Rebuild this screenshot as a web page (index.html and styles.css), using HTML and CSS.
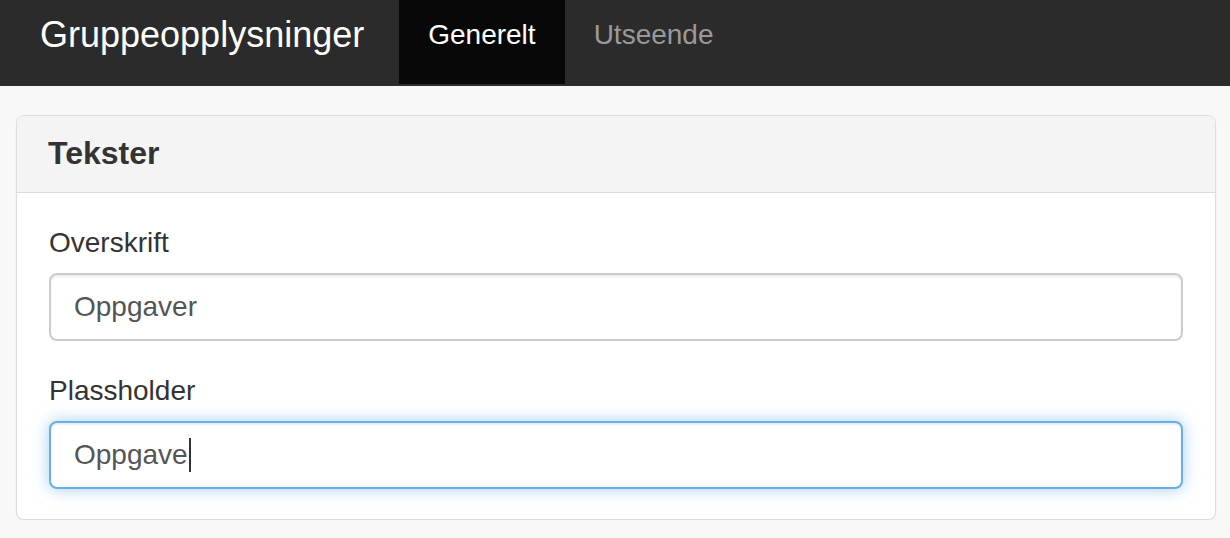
FILE: index.html
```html
<!DOCTYPE html>
<html lang="no">
<head>
<meta charset="utf-8">
<title>Gruppeopplysninger</title>
<link rel="stylesheet" href="styles.css">
</head>
<body>
<nav class="navbar">
  <div class="brand">Gruppeopplysninger</div>
  <ul class="nav">
    <li class="nav-item active">Generelt</li>
    <li class="nav-item">Utseende</li>
  </ul>
</nav>
<main class="main">
  <section class="panel">
    <div class="panel-heading">
      <h3 class="panel-title">Tekster</h3>
    </div>
    <div class="panel-body">
      <div class="form-group">
        <label class="label">Overskrift</label>
        <div class="form-control">Oppgaver</div>
      </div>
      <div class="form-group">
        <label class="label">Plassholder</label>
        <div class="form-control focused">Oppgave<span class="caret-line"></span></div>
      </div>
    </div>
  </section>
</main>
</body>
</html>
```
FILE: styles.css
```css
html, body {
  margin: 0;
  padding: 0;
}
body {
  background: #f8f8f8;
  font-family: "Liberation Sans", Arial, "Helvetica Neue", sans-serif;
  color: #333;
}
.navbar {
  display: flex;
  align-items: stretch;
  height: 84px;
  background: #2b2b2b;
  border-bottom: 2px solid #2d2d2d;
  padding-left: 10px;
}
.brand {
  font-size: 36px;
  line-height: 70px;
  padding: 0 35px 14px 30px;
  color: #fff;
  white-space: nowrap;
}
.nav {
  display: flex;
  list-style: none;
  margin: 0;
  padding: 0;
}
.nav-item {
  font-size: 28px;
  line-height: 70px;
  padding: 0 29px 14px;
  color: #999;
  white-space: nowrap;
}
.nav-item.active {
  background: #080808;
  color: #fff;
}
.main {
  padding: 29px 14px 0 16px;
}
.panel {
  background: #fff;
  border: 1px solid #ddd;
  border-radius: 8px;
  box-shadow: 0 2px 2px rgba(0, 0, 0, 0.05);
  overflow: hidden;
}
.panel-heading {
  background: #f4f4f4;
  border-bottom: 1px solid #ddd;
  padding: 20px 31px 21px;
}
.panel-title {
  margin: 0;
  font-size: 32px;
  line-height: 35px;
  font-weight: bold;
  color: #333;
}
.panel-body {
  padding: 30px 32px;
}
.form-group {
  margin-bottom: 30px;
}
.form-group:last-child {
  margin-bottom: 0;
}
.label {
  display: block;
  font-size: 28px;
  line-height: 40px;
  margin-bottom: 10px;
  color: #333;
}
.form-control {
  box-sizing: border-box;
  height: 68px;
  border: 2px solid #ccc;
  border-radius: 8px;
  padding: 0 23px;
  font-size: 28px;
  line-height: 64px;
  color: #555;
  background: #fff;
  box-shadow: inset 0 2px 2px rgba(0, 0, 0, 0.075);
  display: flex;
  align-items: center;
}
.form-control.focused {
  border-color: #66afe9;
  box-shadow: inset 0 2px 2px rgba(0, 0, 0, 0.075), 0 0 16px rgba(102, 175, 233, 0.6);
}
.caret-line {
  display: inline-block;
  width: 2px;
  height: 34px;
  background: #333;
  margin-left: 1px;
}
```
